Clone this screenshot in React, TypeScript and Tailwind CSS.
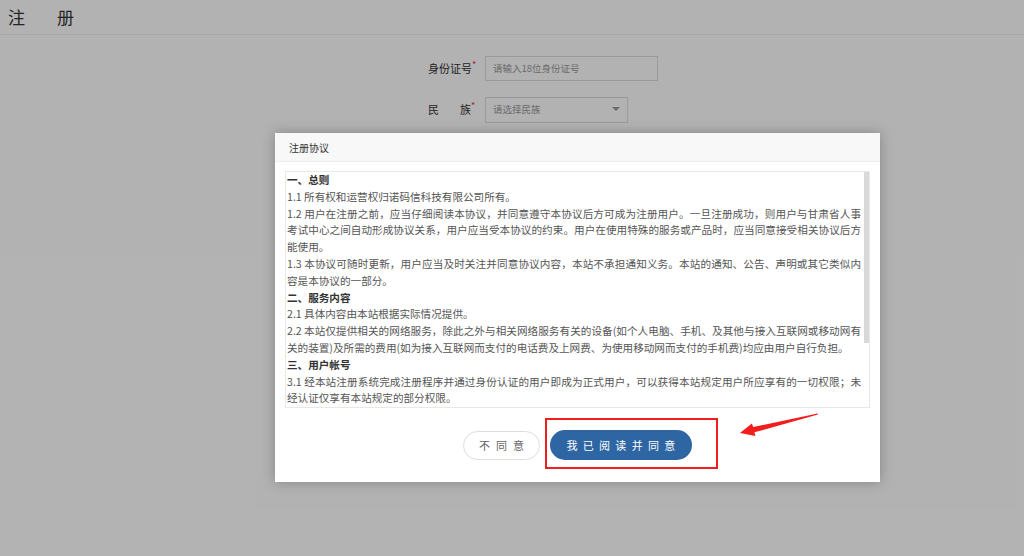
import React from "react";

const lines: { t: string; b?: boolean; j?: boolean }[] = [
  { t: "一、总则", b: true },
  { t: "1.1 所有权和运营权归诺码信科技有限公司所有。" },
  { t: "1.2 用户在注册之前，应当仔细阅读本协议，并同意遵守本协议后方可成为注册用户。一旦注册成功，则用户与甘肃省人事", j: true },
  { t: "考试中心之间自动形成协议关系，用户应当受本协议的约束。用户在使用特殊的服务或产品时，应当同意接受相关协议后方", j: true },
  { t: "能使用。" },
  { t: "1.3 本协议可随时更新，用户应当及时关注并同意协议内容，本站不承担通知义务。本站的通知、公告、声明或其它类似内", j: true },
  { t: "容是本协议的一部分。" },
  { t: "二、服务内容", b: true },
  { t: "2.1 具体内容由本站根据实际情况提供。" },
  { t: "2.2 本站仅提供相关的网络服务，除此之外与相关网络服务有关的设备(如个人电脑、手机、及其他与接入互联网或移动网有", j: true },
  { t: "关的装置)及所需的费用(如为接入互联网而支付的电话费及上网费、为使用移动网而支付的手机费)均应由用户自行负担。" },
  { t: "三、用户帐号", b: true },
  { t: "3.1 经本站注册系统完成注册程序并通过身份认证的用户即成为正式用户，可以获得本站规定用户所应享有的一切权限；未", j: true },
  { t: "经认证仅享有本站规定的部分权限。" },
];

export default function App() {
  return (
    <div
      className="relative w-[1024px] h-[556px] overflow-hidden bg-white"
      style={{ fontFamily: '"Noto Sans CJK SC", "Noto Sans", sans-serif' }}
    >
      {/* page header */}
      <div className="h-[35px] border-b border-[#eee] flex items-center pl-[8px] text-[17px] text-[#333]">
        <span>注</span>
        <span className="ml-[32px]">册</span>
      </div>

      {/* form */}
      <div className="flex flex-col pl-[428px] pt-[21px] gap-[16px]">
        <div className="flex items-center h-[25px]">
          <div className="w-[57px] text-[11px] text-[#333] flex">
            <span>身份证号</span>
            <span className="text-[#e33] text-[9px] -mt-[2px]">*</span>
          </div>
          <div className="w-[173px] h-[25px] border border-[#ddd] flex items-center pl-[7px] text-[9.5px] text-[#999]">
            请输入18位身份证号
          </div>
        </div>
        <div className="flex items-center h-[25px]">
          <div className="w-[57px] text-[11px] text-[#333] flex">
            <span>民</span>
            <span className="ml-[21px]">族</span>
            <span className="text-[#e33] text-[9px] -mt-[2px]">*</span>
          </div>
          <div className="w-[143px] h-[26px] border border-[#ddd] flex items-center justify-between pl-[7px] pr-[7px] text-[9.5px] text-[#999]">
            <span>请选择民族</span>
            <svg width="8" height="5" viewBox="0 0 8 5"><path d="M0 0 L8 0 L4 4 Z" fill="#999" /></svg>
          </div>
        </div>
      </div>

      {/* overlay */}
      <div className="absolute inset-0 bg-black/30" />

      {/* modal */}
      <div className="absolute left-[275px] top-[133px] w-[605px] h-[349px] bg-white shadow-[0_0_12px_rgba(0,0,0,0.25)] flex flex-col">
        <div className="h-[29px] bg-[#f8f8f8] border-b border-[#eee] flex items-center pl-[14px] text-[10px] text-[#333]">
          注册协议
        </div>
        <div className="mx-[10px] mt-[9px] h-[237px] border border-[#e8e8e8] flex overflow-hidden">
          <div className="flex-1 min-w-0 pl-[1px] pr-[3px] text-[10.6px] leading-[16.8px] text-[#555] overflow-hidden">
            {lines.map((l, i) => (
              <div
                key={i}
                className={
                  l.b
                    ? "whitespace-nowrap font-bold text-[#333]"
                    : l.j
                    ? "text-justify [text-align-last:justify] [text-justify:inter-character]"
                    : "whitespace-nowrap"
                }
              >
                {l.t}
              </div>
            ))}
          </div>
          <div className="w-[5px] flex flex-col">
            <div className="h-[171px] bg-[#d9d9d9]" />
          </div>
        </div>
        <div className="flex justify-center items-center gap-[10px] mt-[22px]">
          <div className="w-[77px] h-[29px] rounded-full border border-[#ddd] flex items-center justify-center text-[11px] text-[#666] tracking-[6px] pl-[6px]">
            不同意
          </div>
          <div className="w-[142px] h-[30px] rounded-full bg-[#2e65a3] flex items-center justify-center text-[11px] text-white tracking-[5.3px] pl-[5px]">
            我已阅读并同意
          </div>
        </div>
      </div>

      {/* annotation box */}
      <div className="absolute left-[545px] top-[418px] w-[173px] h-[51px] border-2 border-[#f21d1d]" />

      {/* annotation arrow */}
      <svg className="absolute left-[735px] top-[405px]" width="90" height="40" viewBox="0 0 90 40">
        <polygon
          points="5,28 20.5,31 19.4,27.3 83,9.6 82.6,8.4 18.2,22.1 16.8,18.4"
          fill="#f21d1d"
        />
      </svg>
    </div>
  );
}
